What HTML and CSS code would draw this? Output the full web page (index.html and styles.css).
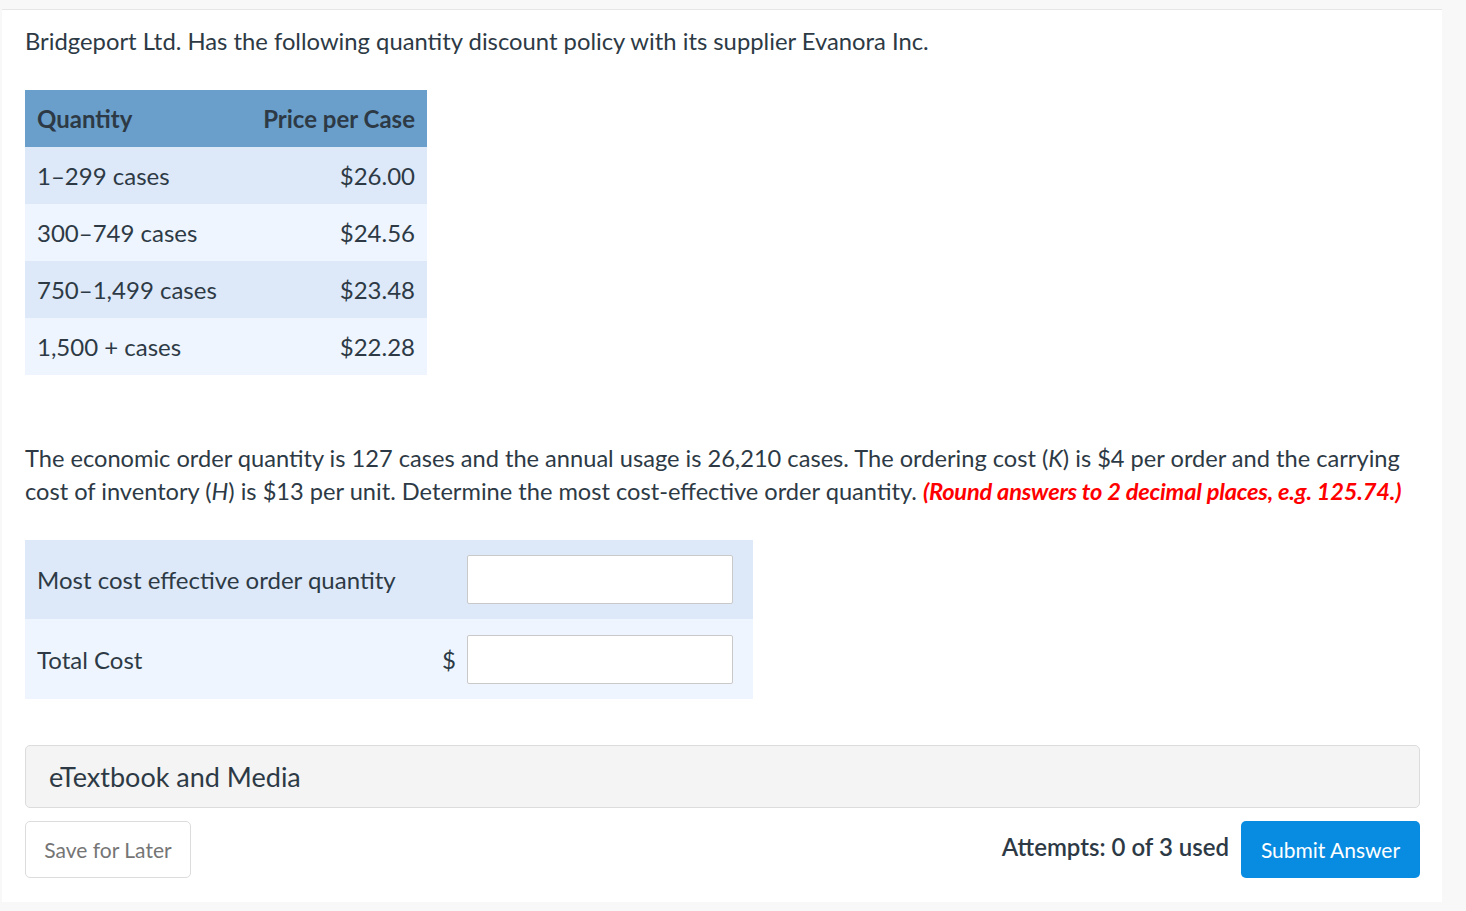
FILE: index.html
```html
<!DOCTYPE html>
<html>
<head>
<meta charset="utf-8">
<link rel="stylesheet" href="styles.css">
</head>
<body>
<div class="panel">
  <p class="intro">Bridgeport Ltd. Has the following quantity discount policy with its supplier Evanora Inc.</p>
  <table class="prices">
    <thead>
      <tr><th class="l">Quantity</th><th class="r">Price per Case</th></tr>
    </thead>
    <tbody>
      <tr class="odd"><td class="l">1–299 cases</td><td class="r">$26.00</td></tr>
      <tr class="even"><td class="l">300–749 cases</td><td class="r">$24.56</td></tr>
      <tr class="odd"><td class="l">750–1,499 cases</td><td class="r">$23.48</td></tr>
      <tr class="even"><td class="l">1,500 + cases</td><td class="r">$22.28</td></tr>
    </tbody>
  </table>
  <p class="question">The economic order quantity is 127 cases and the annual usage is 26,210 cases. The ordering cost (<i>K</i>) is $4 per order and the carrying cost of inventory (<i>H</i>) is $13 per unit. Determine the most cost-effective order quantity. <b class="note">(Round answers to 2 decimal places, e.g. 125.74.)</b></p>
  <div class="answers">
    <div class="arow odd">
      <span class="alabel">Most cost effective order quantity</span>
      <span class="unit"></span>
      <input class="ainput" type="text">
    </div>
    <div class="arow even">
      <span class="alabel">Total Cost</span>
      <span class="unit">$</span>
      <input class="ainput" type="text">
    </div>
  </div>
  <div class="media">eTextbook and Media</div>
  <div class="footer">
    <button class="save">Save for Later</button>
    <div class="right">
      <span class="attempts">Attempts: 0 of 3 used</span>
      <button class="submit">Submit Answer</button>
    </div>
  </div>
</div>
</body>
</html>
```
FILE: styles.css
```css
html, body {
  margin: 0;
  padding: 0;
  background: #f8f8f8;
  font-family: Lato, "Open Sans", sans-serif;
  color: #2d3a45;
}
.panel {
  background: #ffffff;
  margin-left: 2px;
  width: 1440px;
  height: 893px;
  border-top: 1px solid #e6e6e6;
  margin-top: 9px;
  box-sizing: border-box;
  padding: 14px 22px 0 23px;
  overflow: hidden;
}
.intro {
  margin: 0;
  font-size: 23.8px;
  line-height: 34px;
}
.prices {
  margin-top: 32px;
  border-collapse: collapse;
  width: 402px;
  font-size: 24px;
}
.prices th {
  background: #6a9fcc;
  height: 57px;
  padding: 0 12px;
  font-weight: 700;
  color: #2d3a45;
}
.prices td {
  height: 57px;
  padding: 0 12px;
}
.prices .l { text-align: left; }
.prices .r { text-align: right; }
.odd { background: #dde9f9; }
.even { background: #eef5fe; }
.question {
  margin: 67px 0 0 0;
  font-size: 23.64px;
  line-height: 33px;
}
.note {
  color: #ff0000;
  font-style: italic;
  font-weight: 700;
  letter-spacing: -0.2px;
}
.answers {
  margin-top: 32px;
  width: 728px;
}
.arow {
  display: flex;
  align-items: center;
  padding: 0 20px 0 12px;
  height: 79px;
}
.arow.even { height: 80px; }
.alabel {
  font-size: 24px;
  flex: 1;
}
.unit {
  font-size: 24px;
  width: 25px;
  text-align: left;
}
.ainput {
  width: 266px;
  height: 49px;
  box-sizing: border-box;
  border: 1px solid #c9c9c9;
  border-radius: 2px;
  background: #fff;
  margin: 0;
}
.media {
  margin-top: 46px;
  height: 63px;
  box-sizing: border-box;
  border: 1px solid #dcdcdc;
  border-radius: 5px;
  background: #f4f4f4;
  font-size: 27px;
  line-height: 61px;
  padding-left: 23px;
  width: 1395px;
}
.footer {
  margin-top: 13px;
  width: 1395px;
  display: flex;
  justify-content: space-between;
  align-items: flex-start;
}
.save {
  width: 166px;
  height: 57px;
  border: 1px solid #dcdcdc;
  border-radius: 5px;
  background: #fff;
  color: #757575;
  font-family: Lato, sans-serif;
  font-size: 21px;
  padding: 0;
}
.right {
  display: flex;
  align-items: flex-start;
  gap: 12px;
}
.attempts {
  font-size: 24px;
  font-weight: 600;
  line-height: 52px;
  color: #2d3a45;
}
.submit {
  width: 179px;
  height: 57px;
  border: none;
  border-radius: 5px;
  background: #088ce1;
  color: #fff;
  font-family: Lato, sans-serif;
  font-size: 21px;
  padding: 0;
}
```
